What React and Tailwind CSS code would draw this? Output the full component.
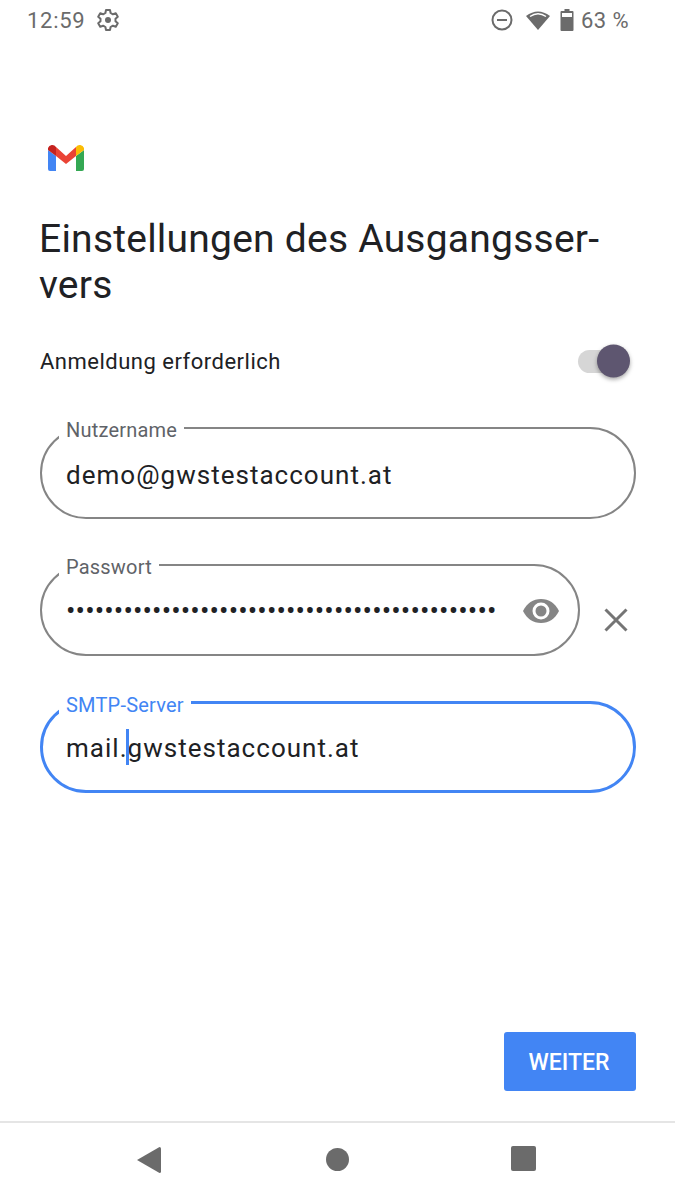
const FONT = "font-['Roboto',sans-serif]";

function GmailLogo() {
  return (
    <svg width="38" height="30" viewBox="0 0 38 30" className="block">
      <path d="M1 8v19a2 2 0 0 0 2 2h6V14z" fill="#4285f4" />
      <path d="M29 14v15h6a2 2 0 0 0 2-2V8z" fill="#34a853" />
      <path d="M9 5 L19 14 L29 5 L29 14 L19 22 L9 14z" fill="#ea4335" />
      <path d="M1 6a4.5 4.5 0 0 1 8-1v9L1 8z" fill="#c5221f" />
      <path d="M29 5a4.5 4.5 0 0 1 8 1v2l-8 6z" fill="#fbbc04" />
    </svg>
  );
}

function Field({ label, active, className, children }) {
  return (
    <fieldset
      className={`rounded-[46px] min-w-0 pr-[24px] ${
        active ? 'h-[105px] border-[3px] border-[#4285f4] pl-[23px]' : 'h-[106px] border-2 border-[#858585] pl-[24px]'
      } ${className || ''}`}
    >
      <legend
        className={`px-[7px] pt-[5px] -ml-[7px] text-[20px] leading-[24px] tracking-[0.2px] ${
          active ? 'text-[#4285f4]' : 'text-[#5f6368]'
        }`}
      >
        {label}
      </legend>
      {children}
    </fieldset>
  );
}

export default function App() {
  return (
    <div className={`${FONT} h-[1200px] w-[675px] flex flex-col bg-white text-[#202124] overflow-hidden`}>
      {/* status bar */}
      <div className="h-[40px] flex items-center justify-between pl-[27px] pr-[46px] text-[#6b6b6b] text-[22px] shrink-0">
        <div className="flex items-center gap-[11px]">
          <span className="tracking-[0.7px]">12:59</span>
          <svg width="24" height="24" viewBox="0 0 24 24" fill="none" stroke="currentColor" strokeWidth="2" strokeLinejoin="round">
            <path d="M10 2h4l.6 3 2.3 1.3 2.9-1 2 3.4-2.3 2v2.6l2.3 2-2 3.4-2.9-1-2.3 1.3-.6 3h-4l-.6-3-2.3-1.3-2.9 1-2-3.4 2.3-2v-2.6l-2.3-2 2-3.4 2.9 1L9.4 5z" />
            <circle cx="12" cy="12" r="3" fill="currentColor" stroke="none" />
          </svg>
        </div>
        <div className="flex items-center">
          <svg width="22" height="22" viewBox="0 0 22 22" fill="none" stroke="currentColor" strokeWidth="2">
            <circle cx="11" cy="11" r="9.5" />
            <path d="M6 11h10" />
          </svg>
          <svg width="26" height="20" viewBox="0 0 26 20" className="ml-[12px]" fill="currentColor">
            <path d="M13 20 L1 6 Q13 -3 25 6z" />
            <path d="M5 6.5 Q13 1 21 6.5" fill="none" stroke="#fff" strokeWidth="1.5" />
          </svg>
          <svg width="14" height="22" viewBox="0 0 14 22" className="ml-[9px]" fill="currentColor">
            <path d="M4.500 0h5v2h3a1 1 0 0 1 1 1v18a1 1 0 0 1-1 1h-11a1 1 0 0 1-1-1V3a1 1 0 0 1 1-1h3z" />
            <rect x="2" y="4" width="10" height="4" fill="#fff" />
          </svg>
          <span className="ml-[7px] tracking-[0.4px]">63 %</span>
        </div>
      </div>

      {/* form */}
      <div className="flex-1 flex flex-col px-[40px] min-h-0">
        <div className="mt-[102px] ml-[7px]">
          <GmailLogo />
        </div>
        <h1 className="mt-[44px] -ml-[1px] text-[39px] leading-[46px] font-normal tracking-[0.23px]">
          Einstellungen des Ausgangsser-
          <br />
          vers
        </h1>
        <div className="mt-[36px] h-[34px] flex items-center justify-between">
          <span className="text-[22px] tracking-[0.5px]">Anmeldung erforderlich</span>
          <div className="relative w-[50px] h-[23px] rounded-full bg-[#d6d6d6] mr-[7px]">
            <div className="absolute -right-[2px] top-1/2 -translate-y-1/2 w-[33px] h-[33px] rounded-full bg-[#5e5670] shadow-[0_2px_4px_rgba(0,0,0,0.35)]" />
          </div>
        </div>

        <Field label="Nutzername" className="mt-[35px] -mr-[1px]">
          <div className="text-[26px] leading-[34px] mt-[16px] tracking-[1.02px]">demo@gwstestaccount.at</div>
        </Field>

        <div className="mt-[31px] flex items-center">
          <Field label="Passwort" className="w-[540px]">
            <div className="flex items-center justify-between mt-[15px]">
              <span className="text-[28px] leading-[34px] whitespace-nowrap tracking-[0.12px]">
                {'•'.repeat(45)}
              </span>
              <svg width="36" height="26" viewBox="0 0 36 26" className="-mr-[5px] shrink-0">
                <path d="M0 13C4 5 10 1 18 1s14 4 18 12c-4 8-10 12-18 12S4 21 0 13z" fill="#858585" />
                <circle cx="18" cy="13" r="8.500" fill="#fff" />
                <circle cx="18" cy="13" r="5.500" fill="#858585" />
              </svg>
            </div>
          </Field>
          <svg width="24" height="24" viewBox="0 0 24 24" className="ml-[24px] mt-[34px] shrink-0" stroke="#757575" strokeWidth="3">
            <path d="M1.500 1.500l21 21M22.500 1.500l-21 21" />
          </svg>
        </div>

        <Field label="SMTP-Server" active className="mt-[32px] -mr-[1px]">
          <div className="text-[26px] leading-[34px] mt-[14px] tracking-[1.02px]">
            mail.
            <span className="relative inline-block w-0 h-0">
              <span className="absolute -left-[2px] -top-[28px] w-[3px] h-[36px] bg-[#4285f4]" />
            </span>
            gwstestaccount.at
          </div>
        </Field>

        <div className="mt-auto mb-[30px] flex justify-end">
          <button className="w-[132px] h-[59px] -mr-[1px] pt-[4px] pr-[2px] rounded-[3px] bg-[#4285f4] text-white text-[23px] font-medium">
            WEITER
          </button>
        </div>
      </div>

      {/* nav bar */}
      <div className="h-[79px] shrink-0 border-t-2 border-[#e5e5e5] flex items-start pt-[23px] text-[#6b6b6b]">
        <svg width="25" height="28" viewBox="0 0 25 28" className="ml-[136px]" fill="currentColor">
          <path d="M23.500 1 L1 14 L23.500 27 Q25 27 25 25.500 V2.500 Q25 1 23.500 1z" />
        </svg>
        <div className="ml-[165px] mt-[2px] w-[23px] h-[23px] rounded-full bg-current" />
        <div className="ml-[162px] w-[25px] h-[25px] rounded-[2px] bg-current" />
      </div>
    </div>
  );
}
